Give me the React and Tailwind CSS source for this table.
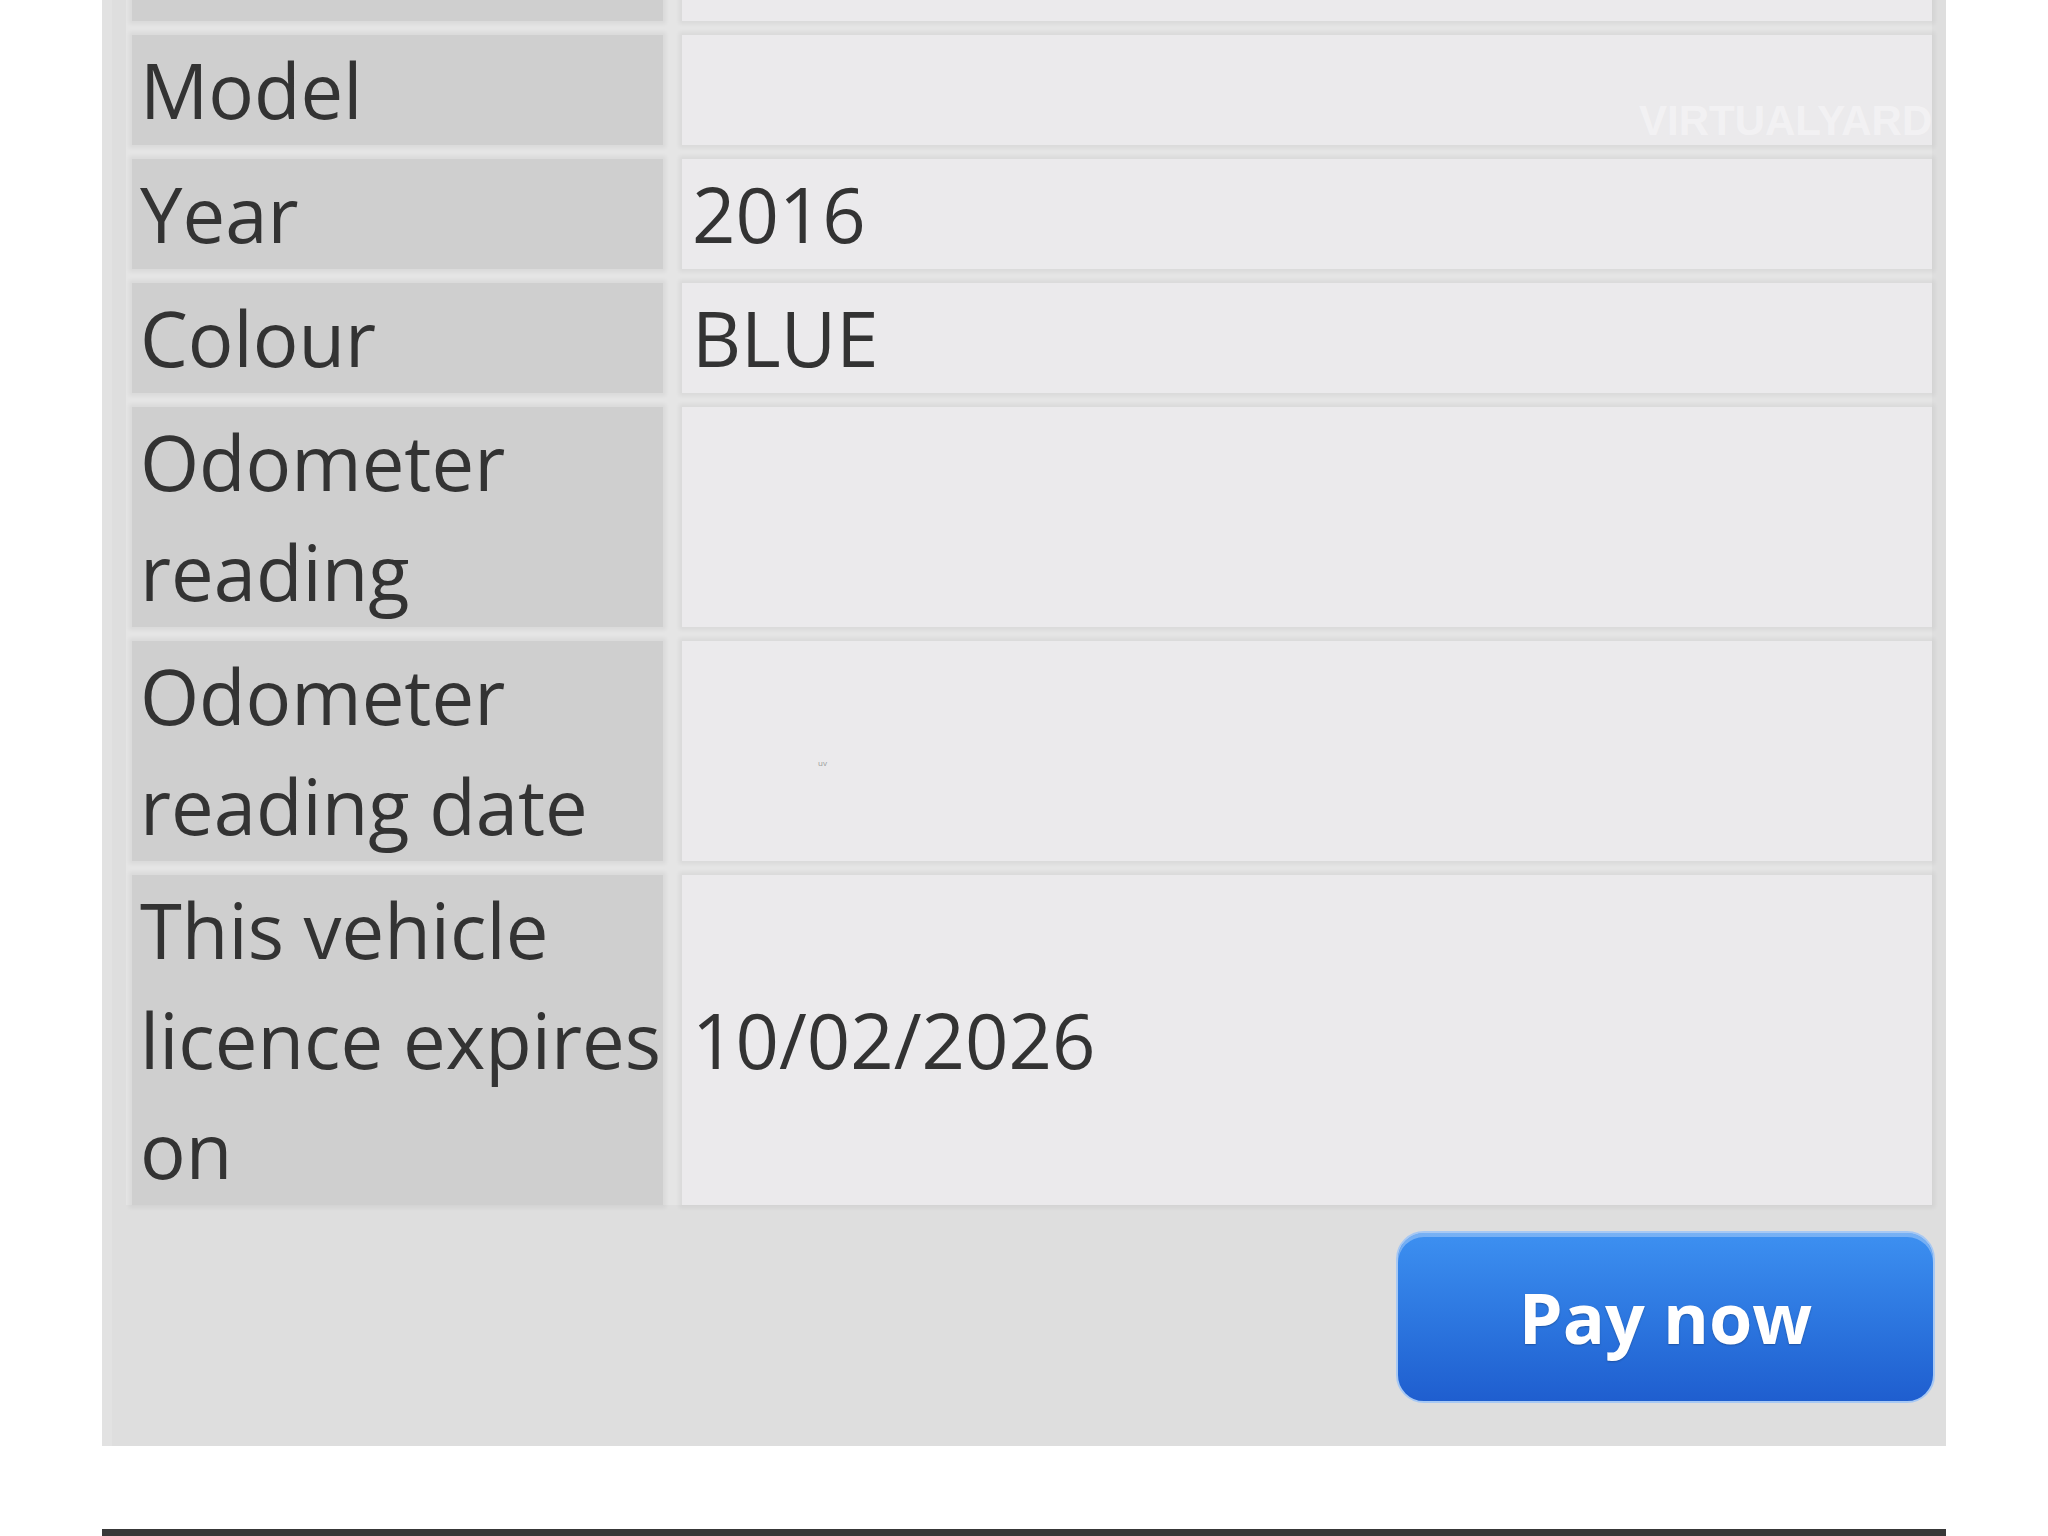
import React from "react";

const rows = [
  { label: ["Model"], value: "" },
  { label: ["Year"], value: "2016" },
  { label: ["Colour"], value: "BLUE" },
  { label: ["Odometer", "reading"], value: "" },
  { label: ["Odometer", "reading date"], value: "", uv: true },
  { label: ["This vehicle", "licence expires", "on"], value: "10/02/2026" },
];

export default function App() {
  return (
    <div
      className="w-[2048px] h-[1536px] bg-white overflow-hidden flex flex-col"
      style={{ fontFamily: '"Open Sans", "Noto Sans", sans-serif' }}
    >
      <div className="relative ml-[102px] w-[1844px] bg-[#dedede] border-l-[10px] border-[#e2e2e2] pl-[20px] pr-[14px] pb-[43px] overflow-hidden">
        <div className="grid grid-cols-[531px_1250px] gap-x-[19px] gap-y-[14px] bg-[#e5e5e5] -ml-[6px] pl-[6px]">
          <div className="h-[21px] bg-[#cfcfcf] shadow-[0_0_4px_3px_rgba(0,0,0,0.05)]" />
          <div className="h-[21px] bg-[#ebeaec] shadow-[0_0_4px_3px_rgba(0,0,0,0.05)]" />
          {rows.map((r, i) => (
            <React.Fragment key={i}>
              <div className="bg-[#cfcfcf] shadow-[0_0_4px_3px_rgba(0,0,0,0.05)] pl-[8px] text-[76px] leading-[110px] text-[#333333] whitespace-nowrap">
                {r.label.map((l, j) => (
                  <div key={j}>{l}</div>
                ))}
              </div>
              <div className="relative bg-[#ebeaec] shadow-[0_0_4px_3px_rgba(0,0,0,0.05)] pl-[10px] flex items-center text-[76px] leading-[110px] text-[#333333]">
                {r.value}
                {r.uv && (
                  <span className="absolute left-[136px] top-[118px] text-[8px] leading-[8px] text-[#9a9a9a]">
                    uv
                  </span>
                )}
              </div>
            </React.Fragment>
          ))}
        </div>
        <span
          className="absolute left-[1527px] top-[98px] text-[42px] leading-[46px] font-bold text-white/40 whitespace-nowrap"
          style={{ fontFamily: '"Liberation Sans", Arial, sans-serif' }}
        >
          VIRTUALYARD
        </span>
        <div className="flex justify-end mt-[26px] -mr-[3px]">
          <button className="w-[539px] h-[172px] rounded-[28px] border-2 border-[#a7c8f3] bg-gradient-to-b from-[#3d90f1] to-[#1f5ecf] shadow-[inset_0_4px_0_rgba(255,255,255,0.3)] text-white font-bold text-[70px] leading-none [text-shadow:0_1px_2px_rgba(0,0,0,0.25)]">
            Pay now
          </button>
        </div>
      </div>
      <div className="mt-auto ml-[102px] w-[1844px] h-[7px] bg-[#383838]" />
    </div>
  );
}
